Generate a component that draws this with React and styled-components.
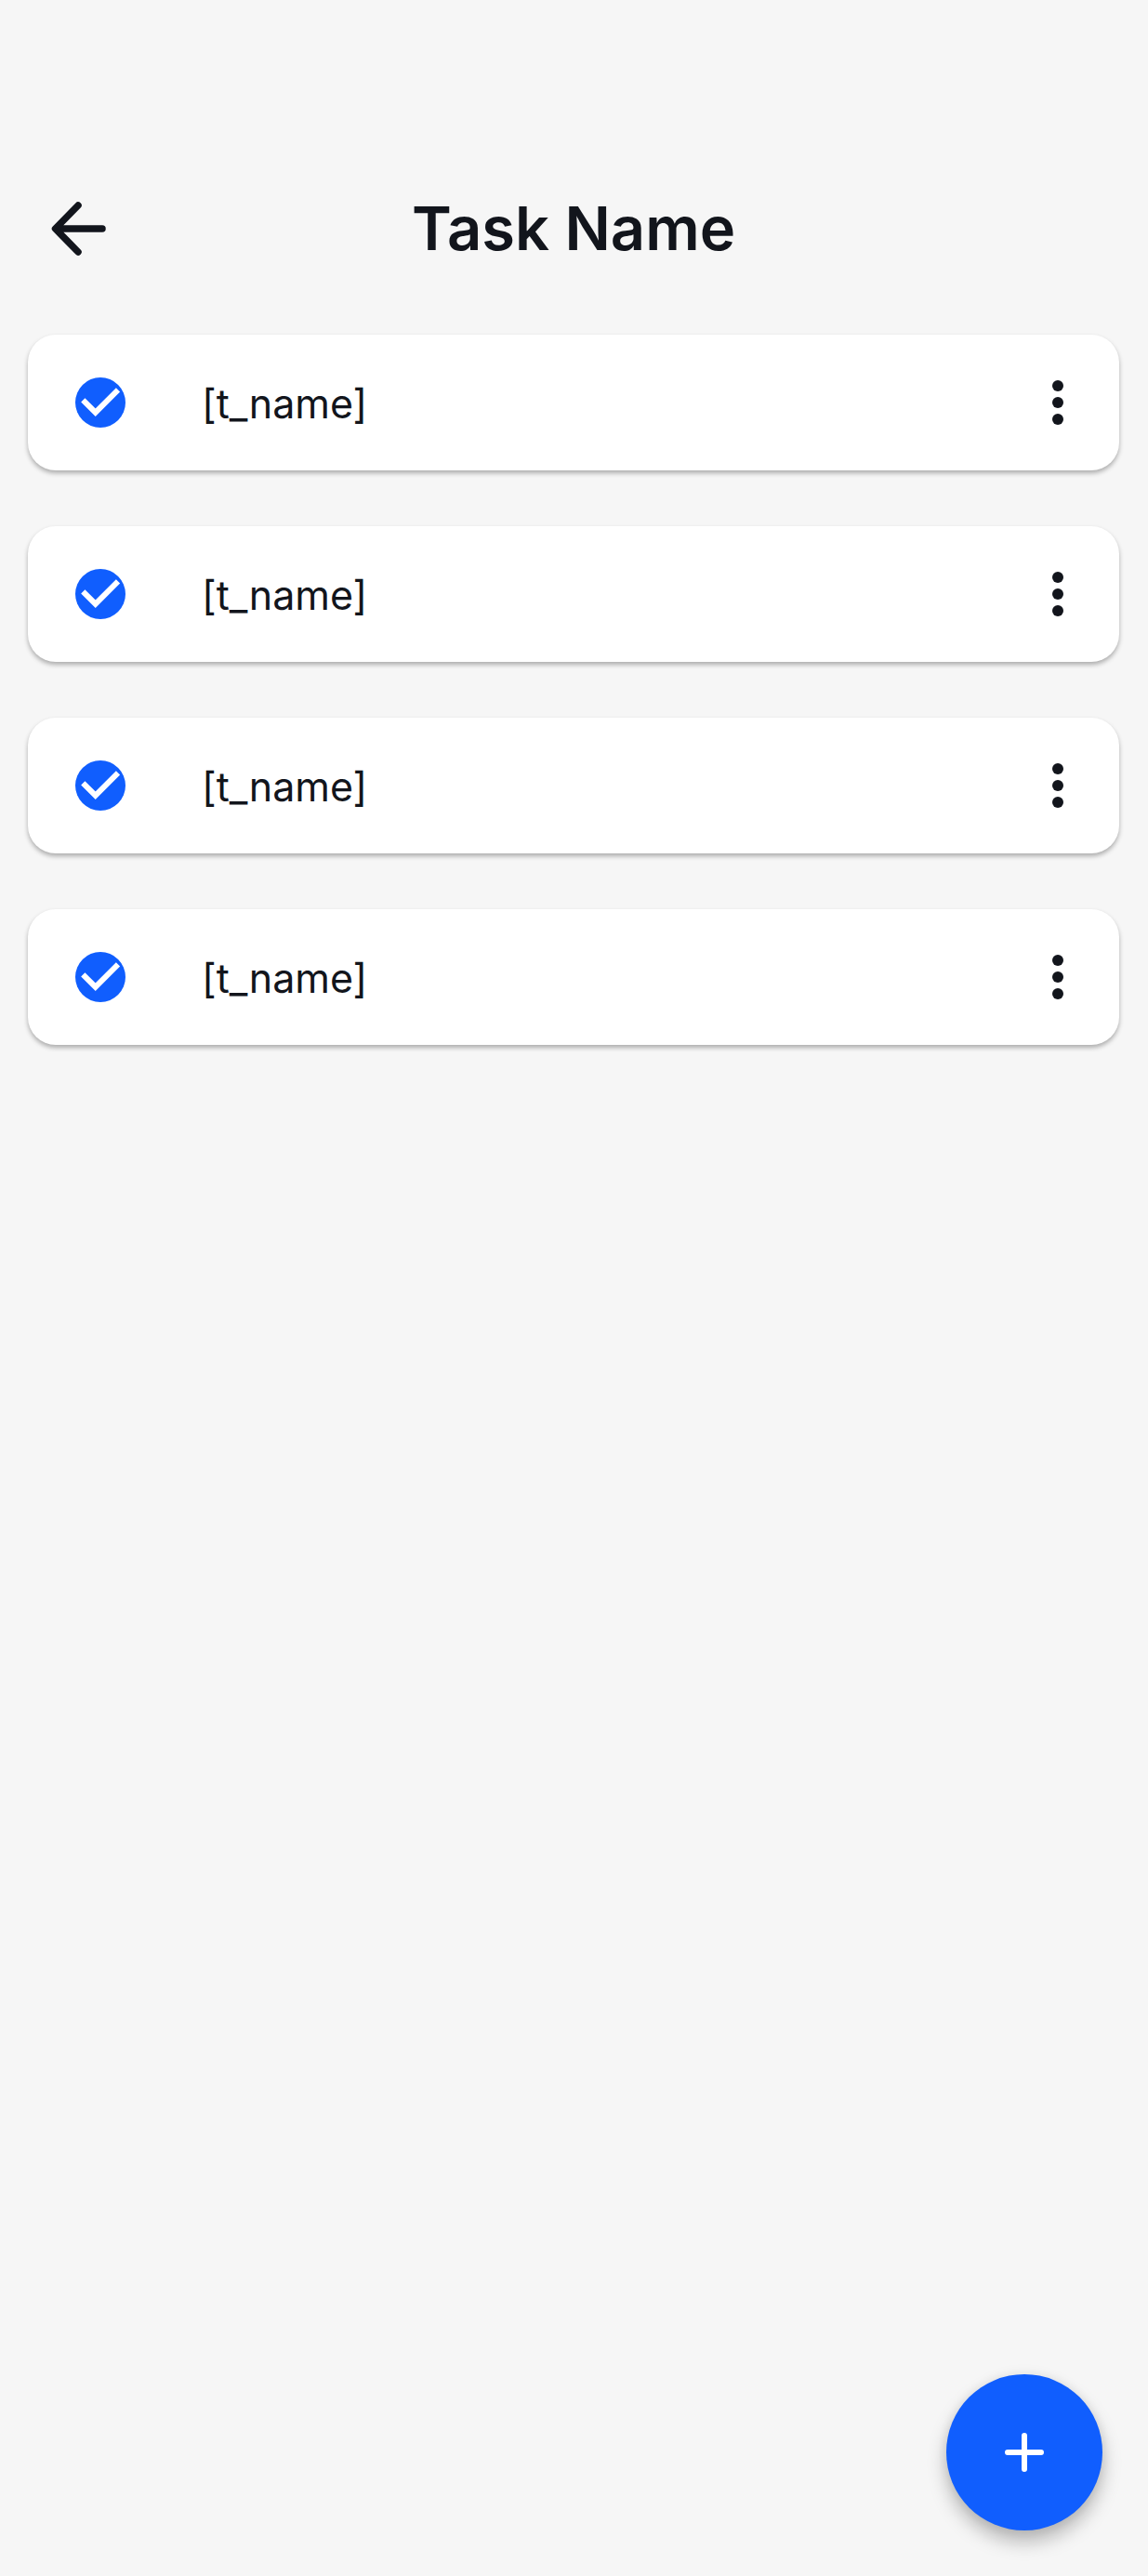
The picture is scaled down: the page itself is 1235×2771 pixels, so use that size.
import React from "react";
import styled, { createGlobalStyle } from "styled-components";

const GlobalStyle = createGlobalStyle`
  * {
    box-sizing: border-box;
  }
  body {
    margin: 0;
    background: #f6f6f6;
    color: #12151c;
    font-family: "Inter", sans-serif;
  }
`;

const Page = styled.div`
  min-height: 100vh;
  padding: 206px 31px 240px 30px;
`;

const Header = styled.header`
  display: grid;
  grid-template-columns: 1fr auto 1fr;
  align-items: center;
  height: 80px;
  margin-bottom: 74px;
`;

const IconButton = styled.button`
  display: flex;
  align-items: center;
  justify-content: center;
  width: ${props => props.$size}px;
  height: ${props => props.$size}px;
  padding: 0;
  border: none;
  background: none;
  color: inherit;
  cursor: pointer;
`;

const BackButton = styled(IconButton)`
  margin-left: 20px;
`;

const Title = styled.h1`
  margin: 0;
  font-size: 65px;
  font-weight: 600;
  line-height: 80px;
`;

const TaskList = styled.ul`
  display: flex;
  flex-direction: column;
  gap: 60px;
  margin: 0;
  padding: 0;
  list-style: none;
`;

const TaskCard = styled.li`
  display: flex;
  align-items: center;
  justify-content: space-between;
  height: 146px;
  padding: 0 36px 0 51px;
  border-radius: 30px;
  background: #ffffff;
  box-shadow: 0 3px 5px rgba(0, 0, 0, 0.3);
`;

const TaskLabel = styled.label`
  display: flex;
  align-items: center;
  gap: 82px;
  cursor: pointer;
`;

const CheckBox = styled.span`
  position: relative;
  width: 54px;
  height: 54px;
  svg {
    display: block;
  }
  input:not(:checked) + svg {
    opacity: 0.25;
  }
`;

const CheckInput = styled.input`
  position: absolute;
  inset: 0;
  width: 100%;
  height: 100%;
  margin: 0;
  opacity: 0;
  cursor: pointer;
`;

const TaskName = styled.span`
  padding-top: 2px;
  font-size: 43px;
  font-weight: 400;
  line-height: 60px;
`;

const AddButton = styled.button`
  position: fixed;
  right: 49px;
  bottom: 49px;
  display: flex;
  align-items: center;
  justify-content: center;
  width: 168px;
  height: 168px;
  padding: 0;
  border: none;
  border-radius: 50%;
  background: #105efe;
  color: #ffffff;
  box-shadow: 0 12px 20px rgba(0, 0, 0, 0.26), 0 0 14px rgba(0, 0, 0, 0.08);
  cursor: pointer;
`;

const BackIcon = () => (
  <svg width="70" height="70" viewBox="0 0 70 70" fill="none">
    <path
      d="M34 10L9.5 35L34 60M11 35H60"
      stroke="currentColor"
      strokeWidth="7.5"
      strokeLinecap="round"
      strokeLinejoin="round"
    />
  </svg>
);

const CheckIcon = () => (
  <svg width="54" height="54" viewBox="0 0 54 54" fill="none">
    <circle cx="27" cy="27" r="27" fill="#105efe" />
    <path d="M8.3 24.3L21.7 37.7L46 13.4" stroke="#ffffff" strokeWidth="6" />
  </svg>
);

const MoreIcon = () => (
  <svg width="60" height="60" viewBox="0 0 60 60" fill="currentColor">
    <circle cx="30" cy="12" r="6" />
    <circle cx="30" cy="30" r="6" />
    <circle cx="30" cy="48" r="6" />
  </svg>
);

const PlusIcon = () => (
  <svg width="60" height="60" viewBox="0 0 60 60" fill="none">
    <path
      d="M30 12V48M12 30H48"
      stroke="currentColor"
      strokeWidth="6"
      strokeLinecap="round"
    />
  </svg>
);

class App extends React.Component {
  state = {
    tasks: [
      { id: 1, name: "[t_name]", done: true },
      { id: 2, name: "[t_name]", done: true },
      { id: 3, name: "[t_name]", done: true },
      { id: 4, name: "[t_name]", done: true }
    ]
  };

  render() {
    const { _onToggle } = this;
    const { tasks } = this.state;

    return (
      <>
        <GlobalStyle />
        <Page>
          <Header>
            <BackButton $size={70} aria-label="Back">
              <BackIcon />
            </BackButton>
            <Title>Task Name</Title>
          </Header>
          <TaskList>
            {tasks.map(task => (
              <TaskCard key={task.id}>
                <TaskLabel>
                  <CheckBox>
                    <CheckInput
                      type="checkbox"
                      checked={task.done}
                      onChange={() => _onToggle(task.id)}
                    />
                    <CheckIcon />
                  </CheckBox>
                  <TaskName>{task.name}</TaskName>
                </TaskLabel>
                <IconButton $size={60} aria-label="More options">
                  <MoreIcon />
                </IconButton>
              </TaskCard>
            ))}
          </TaskList>
          <AddButton aria-label="Add task">
            <PlusIcon />
          </AddButton>
        </Page>
      </>
    );
  }

  _onToggle = id => {
    this.setState(({ tasks }) => ({
      tasks: tasks.map(task =>
        task.id === id ? { ...task, done: !task.done } : task
      )
    }));
  };
}

export default App;
